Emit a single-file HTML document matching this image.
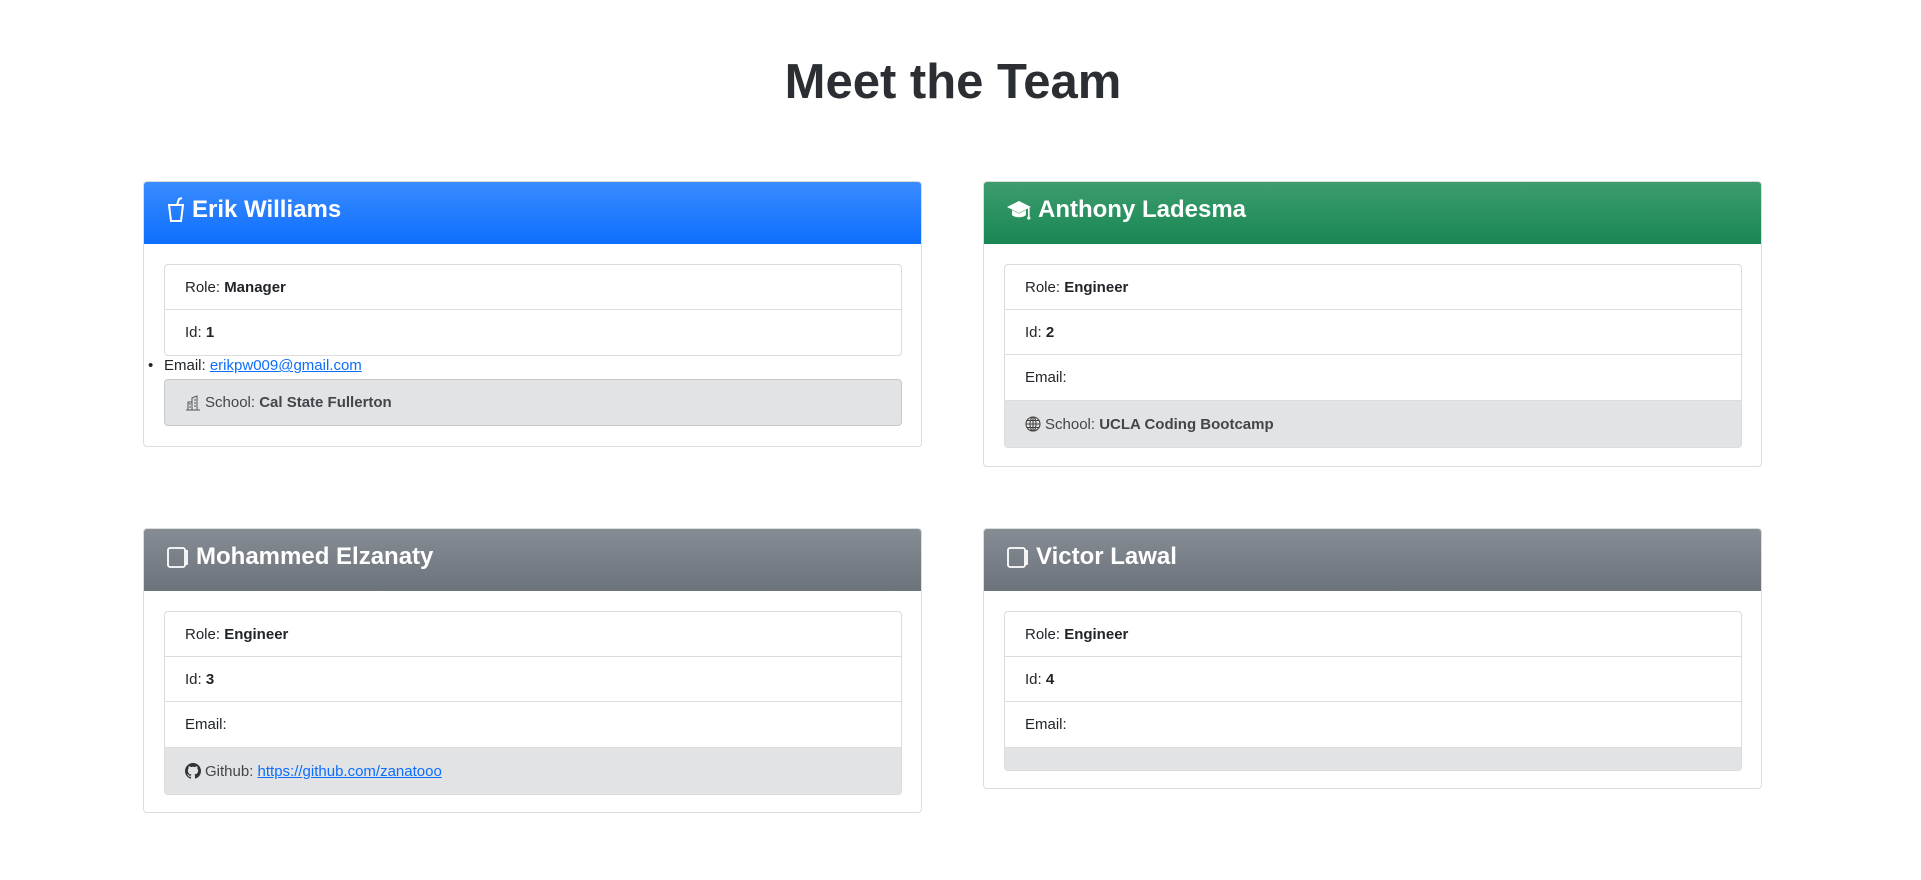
<!DOCTYPE html>
<html><head><meta charset="utf-8"><style>
*{box-sizing:border-box;margin:0;padding:0}
body{width:1921px;height:880px;background:#fff;font-family:"Liberation Sans",sans-serif;color:#212529;position:relative;overflow:hidden}
h1{position:absolute;left:0;width:1906px;top:54px;text-align:center;font-size:49px;font-weight:bold;color:#2b2f33}
.card{position:absolute;width:779px;border:1px solid #dcdcdc;border-radius:4px;background:#fff}
.hd{height:62px;border-radius:3px 3px 0 0;color:#fff;font-size:24px;font-weight:bold;padding:0 0 6px 22px;display:flex;align-items:center;gap:6px}
.blue{background:linear-gradient(#3a8cff,#0d6efd)}
.green{background:linear-gradient(#3d9c6e,#198754)}
.gray{background:linear-gradient(#868c93,#6c737b)}
.list{position:absolute;left:20px;width:738px;border:1px solid #dcdcdc;border-radius:4px;overflow:hidden}
.row{height:45px;border-bottom:1px solid #dcdcdc;padding-left:20px;display:flex;align-items:center;font-size:15px;white-space:pre}
.row svg{margin-right:4px}
.row:last-child{border-bottom:none}
.g{background:#e2e3e5;color:#41464b}
a{color:#0d6efd}
</style></head><body>
<h1>Meet the Team</h1>

<div class="card" style="left:143px;top:181px;height:266px">
 <div class="hd blue"><svg width="20" height="26" viewBox="0 0 20 26" fill="none" stroke="#fff" stroke-width="2"><path d="M3 8h14l-2 16H5z"/><path d="M11 8l2-6 3-1"/></svg>Erik Williams</div>
 <div class="list" style="top:82px"><div class="row">Role: <b>Manager</b></div><div class="row">Id: <b>1</b></div></div>
 <div style="position:absolute;left:0;top:175px;font-size:15px"><span style="position:absolute;left:4px;top:0">•</span><span style="position:absolute;left:20px;white-space:nowrap">Email: <a href="#">erikpw009@gmail.com</a></span></div>
 <div class="list g" style="top:197px;height:47px;border-color:#c8c9cb"><div class="row" style="height:45px;border:none"><svg width="16" height="16" viewBox="0 0 16 16" fill="none" stroke="#555" stroke-width="1"><path d="M1 15h14M3 15V7h4V15M7 15V3l5-2v14M9 5h2M9 8h2M9 11h2M4 9h2M4 12h2"/></svg>School: <b>Cal State Fullerton</b></div></div>
</div>

<div class="card" style="left:983px;top:181px;height:286px">
 <div class="hd green"><svg width="26" height="22" viewBox="0 0 26 22" fill="#fff"><path d="M13 2L1 8l12 6 12-6z"/><path d="M6 11v5c3 3 11 3 14 0v-5l-7 3.5z"/><rect x="22" y="9" width="1.6" height="9"/><circle cx="22.8" cy="19" r="1.6"/></svg>Anthony Ladesma</div>
 <div class="list" style="top:82px"><div class="row">Role: <b>Engineer</b></div><div class="row">Id: <b>2</b></div><div class="row" style="height:46px">Email:</div><div class="row g" style="height:46px"><svg width="16" height="16" viewBox="0 0 16 16" fill="none" stroke="#444" stroke-width="1.1"><circle cx="8" cy="8" r="7"/><ellipse cx="8" cy="8" rx="3" ry="7"/><path d="M1 8h14M2 4.5h12M2 11.5h12M8 1v14"/></svg>School: <b>UCLA Coding Bootcamp</b></div></div>
</div>

<div class="card" style="left:143px;top:528px;height:285px">
 <div class="hd gray"><svg width="24" height="24" viewBox="0 0 24 24" fill="none" stroke="#fff" stroke-width="1.8"><rect x="2" y="3" width="17" height="19" rx="2"/><path d="M19 6h2v13h-2"/></svg>Mohammed Elzanaty</div>
 <div class="list" style="top:82px"><div class="row">Role: <b>Engineer</b></div><div class="row">Id: <b>3</b></div><div class="row" style="height:46px">Email:</div><div class="row g" style="height:46px"><svg width="16" height="16" viewBox="0 0 16 16" fill="#333"><path d="M8 0C3.6 0 0 3.6 0 8c0 3.5 2.3 6.5 5.5 7.6.4.1.5-.2.5-.4v-1.4c-2.2.5-2.7-1-2.7-1-.4-.9-.9-1.2-.9-1.2-.7-.5.1-.5.1-.5.8.1 1.2.8 1.200.8.7 1.2 1.9.9 2.3.7.1-.5.3-.9.5-1.1-1.8-.2-3.6-.9-3.6-4 0-.9.3-1.600.8-2.1-.1-.2-.4-1 .1-2.1 0 0 .7-.2 2.2.8.6-.2 1.3-.3 2-.3s1.4.1 2 .3c1.5-1 2.2-.8 2.2-.8.4 1.1.2 1.9.1 2.1.5.6.8 1.3.8 2.1 0 3.1-1.9 3.7-3.6 3.9.3.3.5.8.5 1.5v2.2c0 .2.1.5.6.4C13.7 14.5 16 11.5 16 8c0-4.4-3.6-8-8-8z"/></svg>Github: <a href="#">https://github.com/zanatooo</a></div></div>
</div>

<div class="card" style="left:983px;top:528px;height:261px">
 <div class="hd gray"><svg width="24" height="24" viewBox="0 0 24 24" fill="none" stroke="#fff" stroke-width="1.8"><rect x="2" y="3" width="17" height="19" rx="2"/><path d="M19 6h2v13h-2"/></svg>Victor Lawal</div>
 <div class="list" style="top:82px"><div class="row">Role: <b>Engineer</b></div><div class="row">Id: <b>4</b></div><div class="row" style="height:46px">Email:</div><div class="row g" style="height:22px"></div></div>
</div>
</body></html>
